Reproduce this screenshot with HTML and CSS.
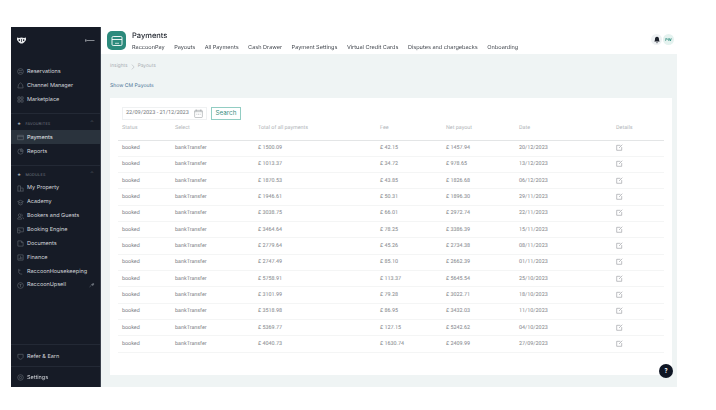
FILE: index.html
```html
<!DOCTYPE html>
<html lang="en">
<head>
<meta charset="utf-8">
<title>Payments</title>
<link rel="stylesheet" href="styles.css">
</head>
<body>
<div class="app">
  <aside class="sidebar">
    <div class="brand">
      <svg class="logo" viewBox="0 0 9 7"><path d="M0 .5l2 .6L4.500 .5 7 1.100 9 .5V3L7 5.500 5.500 6.500h-2L2 5.500 0 3z" fill="#e8eaec"/><path d="M2 2.500l1 .7-1 .5zM7 2.500l-1 .7 1 .5zM4.500 2v3" stroke="#161b26" stroke-width=".7" fill="#161b26"/></svg>
      <svg class="collapse" viewBox="0 0 10 5"><path d="M1.500 2.500h8" stroke="#b8bcc2" stroke-width=".7" fill="none"/><path d="M.8 1.300v2.400" stroke="#c8ccd2" stroke-width=".9" fill="none"/></svg>
    </div>
    <nav class="group top">
      <a class="item"><svg class="ico" viewBox="0 0 8 8"><circle cx="4" cy="4" r="3.300"/><path d="M2 3h4M2 5h4"/></svg>Reservations</a>
      <a class="item"><svg class="ico" viewBox="0 0 8 8"><path d="M1 6.800h6L6.300 3 4 1 1.700 3z"/></svg>Channel Manager</a>
      <a class="item"><svg class="ico" viewBox="0 0 8 8"><path d="M1 1h2.500v2.500H1zM4.500 1H7v2.500H4.500zM1 4.500h2.500V7H1zM4.500 4.500H7V7H4.500z"/></svg>Marketplace</a>
    </nav>
    <div class="group fav">
      <div class="label"><span class="star">★</span>FAVOURITES<span class="caret">⌃</span></div>
      <a class="item active"><svg class="ico" viewBox="0 0 8 8"><path d="M.7 1.500h6.600v5H.7zM.7 3h6.600"/></svg>Payments</a>
      <a class="item"><svg class="ico" viewBox="0 0 8 8"><path d="M7 4a3 3 0 1 1-3-3v3z"/><path d="M5 .8A3 3 0 0 1 7.200 3H5z"/></svg>Reports</a>
    </div>
    <div class="group mod">
      <div class="label"><span class="star">★</span>MODULES<span class="caret">⌃</span></div>
      <a class="item"><svg class="ico" viewBox="0 0 8 8"><path d="M1 7V1h3v6M4 3.500h3V7M.5 7h7"/></svg>My Property</a>
      <a class="item"><svg class="ico" viewBox="0 0 8 8"><path d="M.7 3 4 1.500 7.300 3 4 4.500zM2 4v2l2 .8L6 6V4"/></svg>Academy</a>
      <a class="item"><svg class="ico" viewBox="0 0 8 8"><circle cx="3" cy="2.500" r="1.500"/><path d="M.7 7c0-3 4.600-3 4.600 0zM5.300 1.200a1.500 1.500 0 0 1 0 2.600M6 4.500c1 .4 1.500 1.300 1.500 2.500"/></svg>Bookers and Guests</a>
      <a class="item"><svg class="ico" viewBox="0 0 8 8"><path d="M.7 1h6.600v4.500H4M.7 1v5.800H3.500V3.500H.7"/></svg>Booking Engine</a>
      <a class="item"><svg class="ico" viewBox="0 0 8 8"><path d="M1 1h4l2 2v4H1zM5 1v2h2"/></svg>Documents</a>
      <a class="item"><svg class="ico" viewBox="0 0 8 8"><path d="M1 1h6v6H1zM2.500 6V4.500M4 6V2.500M5.500 6V3.500"/></svg>Finance</a>
      <a class="item"><svg class="ico" viewBox="0 0 8 8"><path d="M2 1v3.500c0 2 1.500 2.500 4 2.500M2 2.500h2"/></svg>RaccoonHousekeeping</a>
      <a class="item"><svg class="ico" viewBox="0 0 8 8"><circle cx="4" cy="4" r="3.300"/><path d="M4 5.800V2.500M2.800 3.500 4 2.300l1.200 1.200"/></svg>RaccoonUpsell<svg class="pin" viewBox="0 0 6 6"><path d="M.5 5 2.500 3.200" stroke="#6a7079" stroke-width=".6"/><path d="M2 2.500 4.300 1 5.300 2 3.800 4z" fill="#6a7079"/></svg></a>
    </div>
    <div class="group refer">
      <a class="item"><svg class="ico" viewBox="0 0 8 8"><path d="M1 1.500h6V4.500C7 6 5 7 4 7.200 3 7 1 6 1 4.500z"/></svg>Refer &amp; Earn</a>
    </div>
    <div class="group settings">
      <a class="item"><svg class="ico" viewBox="0 0 8 8"><circle cx="4" cy="4" r="1.300"/><circle cx="4" cy="4" r="3.200"/></svg>Settings</a>
    </div>
  </aside>
  <div class="content">
    <header class="topbar">
      <div class="app-icon"><svg viewBox="0 0 12 12"><rect x="1" y="1.500" width="10" height="9" rx="1.200" fill="none" stroke="#fff" stroke-width=".9"/><path d="M1 4.500h10" stroke="#fff" stroke-width=".9"/><path d="M4 8.300h4" stroke="#fff" stroke-width=".7"/></svg></div>
      <div class="titles">
        <h1>Payments</h1>
        <div class="tabs"><a>RaccoonPay</a><a>Payouts</a><a>All Payments</a><a>Cash Drawer</a><a>Payment Settings</a><a>Virtual Credit Cards</a><a>Disputes and chargebacks</a><a>Onboarding</a></div>
      </div>
      <div class="actions">
        <span class="circle bell"><svg viewBox="0 0 8 8"><path d="M4 .7c1.500 0 2 1.200 2 2.500 0 1.300.5 1.800.8 2.300H1.200c.3-.5.8-1 .8-2.300C2 1.900 2.500.7 4 .7zM3.200 6.200h1.600L4 7.400z" fill="#1c212b"/></svg></span>
        <span class="circle avatar">PW</span>
      </div>
    </header>
    <main class="main">
      <div class="crumbs"><span>Insights</span><svg class="chev" viewBox="0 0 4 7"><path d="M.7.7 3.300 3.500.7 6.300" fill="none" stroke="#a8adb2" stroke-width=".6"/></svg><span>Payouts</span></div>
      <a class="cm-link">Show CM Payouts</a>
      <section class="card">
        <div class="filters">
          <div class="date">22/09/2023 - 21/12/2023<svg class="cal" viewBox="0 0 10 10"><rect x=".7" y="1.500" width="8.600" height="8" rx="1" fill="none" stroke="#8f9499" stroke-width=".6"/><path d="M.7 3h8.600M2.500.5v2M7.500.5v2" stroke="#8f9499" stroke-width=".6"/><path d="M2.800 5.800h.8M4.600 5.800h.8M6.400 5.800h.8" stroke="#8f9499" stroke-width=".8"/></svg></div>
          <button class="search">Search</button>
        </div>
        <table class="payouts">
          <colgroup><col class="c1"><col class="c2"><col class="c3"><col class="c4"><col class="c5"><col class="c6"><col class="c7"></colgroup>
          <thead><tr><th>Status</th><th>Select</th><th>Total of all payments</th><th>Fee</th><th>Net payout</th><th>Date</th><th>Details</th></tr></thead>
          <tbody>
            <tr><td>booked</td><td>bankTransfer</td><td>£ 1500.09</td><td>£ 42.15</td><td>£ 1457.94</td><td>20/12/2023</td><td><svg class="edit" viewBox="0 0 8 8"><path d="M5 1.500H.8v5.700h5.700V3.500M3.500 4.500 7.200.8" fill="none" stroke="#85898e" stroke-width=".6"/></svg></td></tr>
            <tr><td>booked</td><td>bankTransfer</td><td>£ 1013.37</td><td>£ 34.72</td><td>£ 978.65</td><td>13/12/2023</td><td><svg class="edit" viewBox="0 0 8 8"><path d="M5 1.500H.8v5.700h5.700V3.500M3.500 4.500 7.200.8" fill="none" stroke="#85898e" stroke-width=".6"/></svg></td></tr>
            <tr><td>booked</td><td>bankTransfer</td><td>£ 1870.53</td><td>£ 43.85</td><td>£ 1826.68</td><td>06/12/2023</td><td><svg class="edit" viewBox="0 0 8 8"><path d="M5 1.500H.8v5.700h5.700V3.500M3.500 4.500 7.200.8" fill="none" stroke="#85898e" stroke-width=".6"/></svg></td></tr>
            <tr><td>booked</td><td>bankTransfer</td><td>£ 1946.61</td><td>£ 50.31</td><td>£ 1896.30</td><td>29/11/2023</td><td><svg class="edit" viewBox="0 0 8 8"><path d="M5 1.500H.8v5.700h5.700V3.500M3.500 4.500 7.200.8" fill="none" stroke="#85898e" stroke-width=".6"/></svg></td></tr>
            <tr><td>booked</td><td>bankTransfer</td><td>£ 3038.75</td><td>£ 66.01</td><td>£ 2972.74</td><td>22/11/2023</td><td><svg class="edit" viewBox="0 0 8 8"><path d="M5 1.500H.8v5.700h5.700V3.500M3.500 4.500 7.200.8" fill="none" stroke="#85898e" stroke-width=".6"/></svg></td></tr>
            <tr><td>booked</td><td>bankTransfer</td><td>£ 3464.64</td><td>£ 78.25</td><td>£ 3386.39</td><td>15/11/2023</td><td><svg class="edit" viewBox="0 0 8 8"><path d="M5 1.500H.8v5.700h5.700V3.500M3.500 4.500 7.200.8" fill="none" stroke="#85898e" stroke-width=".6"/></svg></td></tr>
            <tr><td>booked</td><td>bankTransfer</td><td>£ 2779.64</td><td>£ 45.26</td><td>£ 2734.38</td><td>08/11/2023</td><td><svg class="edit" viewBox="0 0 8 8"><path d="M5 1.500H.8v5.700h5.700V3.500M3.500 4.500 7.200.8" fill="none" stroke="#85898e" stroke-width=".6"/></svg></td></tr>
            <tr><td>booked</td><td>bankTransfer</td><td>£ 2747.49</td><td>£ 85.10</td><td>£ 2662.39</td><td>01/11/2023</td><td><svg class="edit" viewBox="0 0 8 8"><path d="M5 1.500H.8v5.700h5.700V3.500M3.500 4.500 7.200.8" fill="none" stroke="#85898e" stroke-width=".6"/></svg></td></tr>
            <tr><td>booked</td><td>bankTransfer</td><td>£ 5758.91</td><td>£ 113.37</td><td>£ 5645.54</td><td>25/10/2023</td><td><svg class="edit" viewBox="0 0 8 8"><path d="M5 1.500H.8v5.700h5.700V3.500M3.500 4.500 7.200.8" fill="none" stroke="#85898e" stroke-width=".6"/></svg></td></tr>
            <tr><td>booked</td><td>bankTransfer</td><td>£ 3101.99</td><td>£ 79.28</td><td>£ 3022.71</td><td>18/10/2023</td><td><svg class="edit" viewBox="0 0 8 8"><path d="M5 1.500H.8v5.700h5.700V3.500M3.500 4.500 7.200.8" fill="none" stroke="#85898e" stroke-width=".6"/></svg></td></tr>
            <tr><td>booked</td><td>bankTransfer</td><td>£ 3518.98</td><td>£ 86.95</td><td>£ 3432.03</td><td>11/10/2023</td><td><svg class="edit" viewBox="0 0 8 8"><path d="M5 1.500H.8v5.700h5.700V3.500M3.500 4.500 7.200.8" fill="none" stroke="#85898e" stroke-width=".6"/></svg></td></tr>
            <tr><td>booked</td><td>bankTransfer</td><td>£ 5369.77</td><td>£ 127.15</td><td>£ 5242.62</td><td>04/10/2023</td><td><svg class="edit" viewBox="0 0 8 8"><path d="M5 1.500H.8v5.700h5.700V3.500M3.500 4.500 7.200.8" fill="none" stroke="#85898e" stroke-width=".6"/></svg></td></tr>
            <tr><td>booked</td><td>bankTransfer</td><td>£ 4040.73</td><td>£ 1630.74</td><td>£ 2409.99</td><td>27/09/2023</td><td><svg class="edit" viewBox="0 0 8 8"><path d="M5 1.500H.8v5.700h5.700V3.500M3.500 4.500 7.200.8" fill="none" stroke="#85898e" stroke-width=".6"/></svg></td></tr>
          </tbody>
        </table>
      </section>
      <button class="help">?</button>
    </main>
  </div>
</div>
</body>
</html>
```
FILE: styles.css
```css
* { box-sizing: border-box; }
html, body { margin: 0; background: #fff; }
body { padding: 27px 39px 23px 11px; font-family: Inter, Roboto, "Liberation Sans", sans-serif; overflow: hidden; text-rendering: geometricPrecision; }
.app { display: flex; width: 666px; height: 360px; filter: blur(.3px); }
.sidebar { width: 90px; flex: none; background: #161b26; border-right: 1px solid #3a414c; display: flex; flex-direction: column; color: #d9dce0; }
.brand { height: 37px; display: flex; align-items: flex-start; justify-content: space-between; padding: 10px 5px 0 6px; }
.logo { width: 9px; height: 7px; }
.collapse { width: 10px; height: 5px; margin-top: 1px; }
.group { border-bottom: 1px solid #232935; }
.top { padding-bottom: 7px; }
.item { display: flex; align-items: center; height: 14px; padding: 1px 6px 0; font-size: 5.500px; font-weight: 400; color: #d3d6db; white-space: nowrap; }
.item.active { background: #2a333d; color: #e6e9ec; }
.mod .item { height: 13.860px; }
.ico { width: 7px; height: 7px; margin-right: 3px; flex: none; fill: none; stroke: #6e747d; stroke-width: .6; }
.pin { width: 6px; height: 6px; margin-left: auto; margin-right: -1px; }
.label { display: flex; align-items: center; height: 14px; padding: 0 6px; font-size: 3.800px; letter-spacing: .2px; color: #737a84; }
.star { margin-right: 4px; color: #a5aab1; font-size: 4px; }
.caret { margin-left: auto; color: #4d545e; font-size: 5px; }
.fav { padding: 2px 0 7px; }
.mod { padding: 1px 0 0; flex: 1; }
.refer { padding: 4px 0 3px; }
.settings { border-bottom: 0; padding: 3px 0 3px; }
.content { flex: 1; display: flex; flex-direction: column; min-width: 0; }
.topbar { height: 27px; background: #fff; display: flex; padding: 4px 3px 0 6px; flex: none; }
.app-icon { width: 19px; height: 19px; border-radius: 5px; background: #2c8a7c; display: flex; align-items: center; justify-content: center; }
.app-icon svg { width: 12px; height: 12px; }
.titles { margin-left: 6px; }
h1 { margin: 0; font-size: 7.500px; font-weight: 500; line-height: 9px; color: #20252e; }
.tabs { display: flex; gap: 9.500px; margin-top: 5px; font-size: 5.570px; line-height: 6px; color: #444950; white-space: nowrap; }
.actions { margin-left: auto; display: flex; gap: 1px; padding-top: 3px; }
.circle { width: 11px; height: 11px; border-radius: 50%; display: flex; align-items: center; justify-content: center; }
.bell { background: #eef1f3; }
.bell svg { width: 8px; height: 8px; }
.avatar { background: #e4f2ef; color: #2c8a7c; font-size: 3.800px; font-weight: 700; }
.main { flex: 1; position: relative; background: #eff4f4; padding: 9px 5px 12px 9px; display: flex; flex-direction: column; }
.crumbs { display: flex; align-items: center; gap: 3px; font-size: 4.800px; line-height: 7px; color: #a9aeb3; }
.chev { width: 4px; height: 6px; }
.cm-link { margin-top: 13px; font-size: 5.100px; line-height: 7px; color: #4a7395; }
.card { margin-top: 8px; flex: 1; background: #fff; padding: 8px 8px 0 8px; }
.filters { display: flex; align-items: center; gap: 4px; padding-left: 4px; height: 14px; }
.date { width: 85px; height: 13px; border: 1px solid #eff1f2; display: flex; align-items: center; justify-content: space-between; padding: 0 3px; font-family: Roboto, sans-serif; font-size: 5.500px; color: #707479; white-space: nowrap; }
.cal { width: 9px; height: 9px; }
.search { width: 30px; height: 13px; padding: 0; border: 1px solid #92cdc3; background: #fff; color: #3d8f82; font-family: inherit; font-size: 6.300px; line-height: 1; }
.payouts { margin-top: 5px; width: 546px; border-collapse: collapse; table-layout: fixed; font-family: Roboto, sans-serif; }
.c1 { width: 53px; } .c2 { width: 83px; } .c3 { width: 122px; } .c4 { width: 66px; } .c5 { width: 73px; } .c6 { width: 97px; }
th { text-align: left; vertical-align: top; font-weight: 400; font-size: 5.400px; line-height: 7px; color: #b0b4b8; height: 15px; padding: 0 0 0 4px; border-bottom: 1px solid #e3e5e6; white-space: nowrap; }
td { font-size: 5.400px; color: #7d8186; height: 16.330px; padding: 0 0 0 4px; border-bottom: 1px solid #f4f5f5; white-space: nowrap; }
.edit { display: block; width: 7px; height: 7px; margin-top: -1px; }
.help { position: absolute; right: 4px; bottom: 9px; width: 14px; height: 14px; border-radius: 50%; border: 0; padding: 0; background: #0f1624; color: #fff; font-family: inherit; font-size: 5.500px; font-weight: 700; }
```
